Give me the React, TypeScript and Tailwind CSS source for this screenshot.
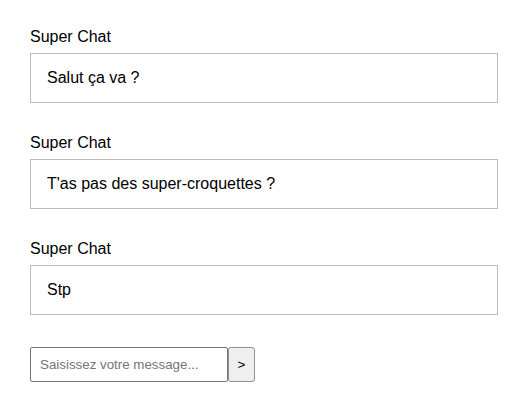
const messages = ["Salut ça va ?", "T'as pas des super-croquettes ?", "Stp"]

export default function App() {
  return (
    <div className="bg-white pl-[30px] pt-[28px] font-['Liberation_Sans',Arial,sans-serif] text-black">
      <div className="flex flex-col gap-[31px]">
        {messages.map((msg, i) => (
          <div key={i} className="flex flex-col">
            <div className="text-base leading-[18px]">Super Chat</div>
            <div className="mt-[7px] w-[468px] border border-[#bbbbbb] px-4 py-[15px] text-base leading-[18px]">
              {msg}
            </div>
          </div>
        ))}
      </div>

      {/* message input */}
      <div className="mt-8 flex items-stretch">
        <input
          className="h-[35px] w-[198px] rounded-[2px] border border-[#767676] bg-white px-[9px] text-[13.33px] outline-none placeholder:text-[#757575]"
          placeholder="Saisissez votre message..."
        />
        <button className="h-[35px] w-[27px] rounded-[3px] border border-[#8f8f8f] bg-[#efefef] text-[13.33px] text-black">
          &gt;
        </button>
      </div>
    </div>
  )
}
